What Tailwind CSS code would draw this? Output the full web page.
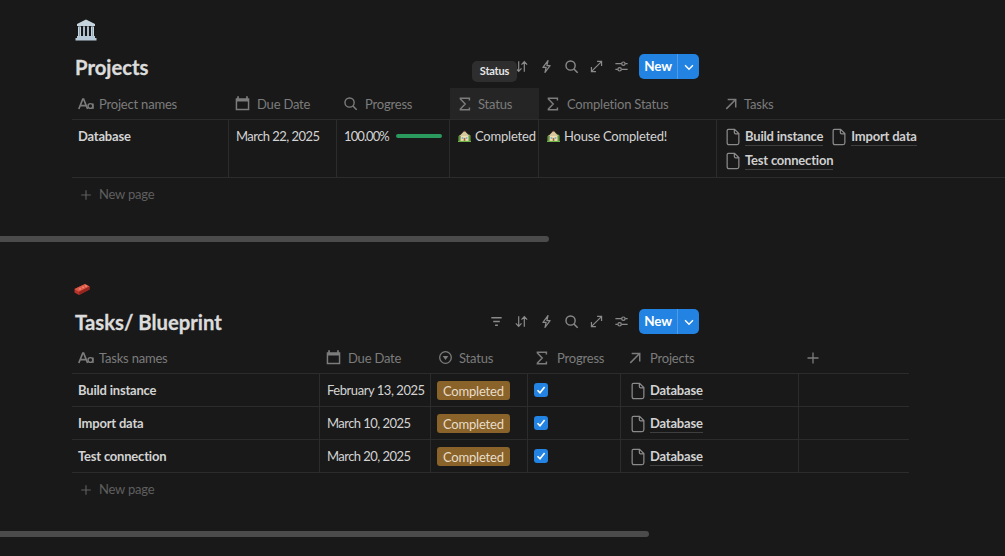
<!DOCTYPE html>
<html>
<head>
<meta charset="utf-8">
<script src="https://cdn.jsdelivr.net/npm/@tailwindcss/browser@4"></script>
</head>
<body class="bg-[#191919]">
<svg width="0" height="0" class="absolute">
  <defs>
    <symbol id="aa" viewBox="0 0 16 16"><path d="M0.8 13 L4.8 3 H5.6 L9.6 13 M2.3 9.6 H8.1" fill="none" stroke="currentColor" stroke-width="1.7"/><circle cx="12.4" cy="10" r="2.4" fill="none" stroke="currentColor" stroke-width="1.4"/><path d="M15 7.5 V13" stroke="currentColor" stroke-width="1.4"/></symbol>
    <symbol id="cal" viewBox="0 0 16 16"><path d="M3 1.2 H4.6 V3 H11.4 V1.2 H13 V3 H14.4 V14.4 H1.6 V3 H3 Z M3 6 V13 H13 V6 Z" fill="currentColor" fill-rule="evenodd"/></symbol>
    <symbol id="search" viewBox="0 0 16 16"><circle cx="7" cy="7" r="4.9" fill="none" stroke="currentColor" stroke-width="1.5"/><path d="M10.6 10.6 L14.6 14.6" stroke="currentColor" stroke-width="1.6"/></symbol>
    <symbol id="sigma" viewBox="0 0 16 16"><path d="M12.4 4.4 V2.2 H3.4 V3 L8.2 8 L3.4 13 V13.8 H12.4 V11.6" fill="none" stroke="currentColor" stroke-width="1.5"/></symbol>
    <symbol id="arrow" viewBox="0 0 16 16"><path d="M2.6 13.6 L13 3.2 M4.2 2.8 H13.4 V12" fill="none" stroke="currentColor" stroke-width="1.7"/></symbol>
    <symbol id="doc" viewBox="0 0 16 16"><path d="M3.8 1.2 H9.4 L13.2 5 V13.2 Q13.2 14.8 11.6 14.8 H4.4 Q2.8 14.8 2.8 13.2 V2.2 Q2.8 1.2 3.8 1.2 Z M9.2 1.4 V4 Q9.2 5.2 10.4 5.2 H13" fill="none" stroke="currentColor" stroke-width="1.1"/></symbol>
    <symbol id="plus" viewBox="0 0 16 16"><path d="M8 2.5 V13.5 M2.5 8 H13.5" stroke="currentColor" stroke-width="1.3"/></symbol>
    <symbol id="filter" viewBox="0 0 16 16"><path d="M2.5 4 H13.5 M4.5 8 H11.5 M6.5 12 H9.5" stroke="currentColor" stroke-width="1.4"/></symbol>
    <symbol id="sort" viewBox="0 0 16 16"><path d="M5 2.5 V13 M2 10 L5 13.2 L8 10 M11 13.5 V3 M8 6 L11 2.8 L14 6" fill="none" stroke="currentColor" stroke-width="1.3"/></symbol>
    <symbol id="bolt" viewBox="0 0 16 16"><path d="M9.6 1.6 L4.2 9 H7.6 L6.4 14.4 L11.8 7 H8.4 Z" fill="none" stroke="currentColor" stroke-width="1.3" stroke-linejoin="round"/></symbol>
    <symbol id="expand" viewBox="0 0 16 16"><path d="M3 13 L13 3 M8.6 2.6 H13.4 V7.4 M2.6 8.6 V13.4 H7.4" fill="none" stroke="currentColor" stroke-width="1.3"/></symbol>
    <symbol id="sliders" viewBox="0 0 16 16"><path d="M1.5 5 H8 M12 5 H14.5 M1.5 11 H4 M8 11 H14.5" stroke="currentColor" stroke-width="1.3"/><circle cx="10" cy="5" r="1.8" fill="none" stroke="currentColor" stroke-width="1.3"/><circle cx="6" cy="11" r="1.8" fill="none" stroke="currentColor" stroke-width="1.3"/></symbol>
    <symbol id="chev" viewBox="0 0 16 16"><path d="M3.5 6 L8 10.5 L12.5 6" fill="none" stroke="currentColor" stroke-width="1.6"/></symbol>
    <symbol id="status" viewBox="0 0 16 16"><circle cx="8" cy="8" r="6.2" fill="none" stroke="currentColor" stroke-width="1.4"/><path d="M5 6.4 H11 L8 10.6 Z" fill="currentColor"/></symbol>
    <symbol id="house" viewBox="0 0 16 16"><path d="M0.5 15 V9 L2.5 7 L3.5 15 Z M15.5 15 V8 L13 6 L12 15 Z" fill="#5c9a3c"/><path d="M3 15 V8 H13 V15 Z" fill="#f1dfb0"/><path d="M1.8 8.6 L8 2 L14.2 8.6 Z" fill="#d8c79c"/><path d="M8 2 L9.6 3.7 H6.4 Z" fill="#a8553f"/><path d="M4.5 10 H6.5 V12 H4.5 Z M9.5 10 H11.5 V12 H9.5 Z" fill="#6fa8d6"/><path d="M7 11 H9 V15 H7 Z" fill="#9a6b3d"/><path d="M0 14.6 H16 V16 H0 Z" fill="#6db34a"/></symbol>
  </defs>
</svg>

<main class="w-[1005px] h-[556px] overflow-hidden relative bg-[#191919] font-['Lato','Liberation_Sans',sans-serif] text-[13px] tracking-[-0.2px] text-[#d3d3d3]">

  <!-- Projects -->
  <section class="pt-[19px]">
    <div class="pl-[74px] h-[22px]">
      <svg width="24" height="22" viewBox="0 0 24 22" class="block">
        <path d="M12 0.5 L21 5 V7 H3 V5 Z" fill="#c6d4de"/>
        <path d="M1.5 19 H22.5 V21.5 H1.5 Z M3 17 H21 V19 H3 Z" fill="#b9cbd8"/>
        <path d="M4 7.5 H7 V17 H4 Z M9 7.5 H11 V17 H9 Z M13 7.5 H15 V17 H13 Z M17 7.5 H20 V17 H17 Z" fill="#c6d4de"/>
        <path d="M5 7.5 H6 V17 H5 Z M9.5 7.5 H10.5 V17 H9.5 Z M13.5 7.5 H14.5 V17 H13.5 Z M18 7.5 H19 V17 H18 Z" fill="#8fa5b5"/>
      </svg>
    </div>
    <div class="mt-[13px] ml-[75px] w-[624px] h-[25px] flex items-center justify-between">
      <h2 class="mt-[2px] text-[20.3px] tracking-normal leading-[25px] font-bold [-webkit-text-stroke:0.3px] text-[#dcdcdc]">Projects</h2>
      <div class="flex items-center text-[#8a8a8a]">
        <svg class="w-[15px] h-[15px] mr-[10px]"><use href="#sort"/></svg>
        <svg class="w-[15px] h-[15px] mr-[10px]"><use href="#bolt"/></svg>
        <svg class="w-[15px] h-[15px] mr-[10px]"><use href="#search"/></svg>
        <svg class="w-[15px] h-[15px] mr-[10px]"><use href="#expand"/></svg>
        <svg class="w-[15px] h-[15px] mr-[10px]"><use href="#sliders"/></svg>
        <div class="flex h-[25px] w-[60px] rounded-[5px] bg-[#2383e2] text-white font-bold text-[13.5px] items-stretch">
          <span class="w-[39px] flex items-center justify-center border-r border-white/20">New</span>
          <span class="flex-1 flex items-center justify-center"><svg class="w-[14px] h-[14px]"><use href="#chev"/></svg></span>
        </div>
      </div>
    </div>

    <div class="mt-[9px] ml-[72px] w-[933px]">
      <div class="grid grid-cols-[157px_108px_113px_89px_178px_1fr] h-[32px] border-b border-[#2c2c2c] text-[#7c7c7c]">
        <div class="flex items-center gap-[5px] pl-[6px] pt-[3px]"><svg class="w-[16px] h-[16px] mb-[3px]"><use href="#aa"/></svg>Project names</div>
        <div class="flex items-center gap-[6px] pl-[5px] pt-[3px]"><svg class="w-[17px] h-[17px] mb-[3px]"><use href="#cal"/></svg>Due Date</div>
        <div class="flex items-center gap-[7px] pl-[6px] pt-[3px]"><svg class="w-[15px] h-[15px] mb-[3px]"><use href="#search"/></svg>Progress</div>
        <div class="flex items-center gap-[5px] pl-[7px] pt-[3px] bg-[#252525]"><svg class="w-[16px] h-[16px] mb-[3px]"><use href="#sigma"/></svg>Status</div>
        <div class="flex items-center gap-[6px] pl-[6px] pt-[3px]"><svg class="w-[16px] h-[16px] mb-[3px]"><use href="#sigma"/></svg>Completion Status</div>
        <div class="flex items-center gap-[6px] pl-[7px] pt-[3px]"><svg class="w-[14px] h-[14px] mb-[3px]"><use href="#arrow"/></svg>Tasks</div>
      </div>
      <div class="grid grid-cols-[157px_108px_113px_89px_178px_1fr] h-[58px] border-b border-[#2c2c2c]">
        <div class="border-r border-[#2c2c2c] pl-[6px] pt-[7px] font-bold">Database</div>
        <div class="border-r border-[#2c2c2c] pl-[7px] pt-[7px] tracking-[-0.55px]">March 22, 2025</div>
        <div class="border-r border-[#2c2c2c] pl-[7px] pt-[7px] flex items-start gap-[7px]"><span class="tracking-[-0.9px]">100.00%</span><span class="w-[46px] h-[4px] mt-[7px] rounded-full bg-[#2b9a5f]"></span></div>
        <div class="border-r border-[#2c2c2c] pl-[8px] pt-[7px] flex items-start gap-[4px] whitespace-nowrap"><svg class="w-[13px] h-[13px] mt-[2px] shrink-0"><use href="#house"/></svg>Completed</div>
        <div class="border-r border-[#2c2c2c] pl-[8px] pt-[7px] flex items-start gap-[4px] whitespace-nowrap"><svg class="w-[13px] h-[13px] mt-[2px] shrink-0"><use href="#house"/></svg>House Completed!</div>
        <div class="pl-[7px] pt-[7px] font-bold text-[#cfcfcf]">
          <div class="flex items-center h-[19px] gap-[7px]">
            <span class="flex items-center gap-[3px]"><svg class="w-[18px] h-[18px] text-[#8a8a8a]"><use href="#doc"/></svg><span class="border-b border-[#3f3f3f] leading-[17px]">Build instance</span></span>
            <span class="flex items-center gap-[3px]"><svg class="w-[18px] h-[18px] text-[#8a8a8a]"><use href="#doc"/></svg><span class="border-b border-[#3f3f3f] leading-[17px]">Import data</span></span>
          </div>
          <div class="flex items-center h-[19px] mt-[5px]">
            <span class="flex items-center gap-[3px]"><svg class="w-[18px] h-[18px] text-[#8a8a8a]"><use href="#doc"/></svg><span class="border-b border-[#3f3f3f] leading-[17px]">Test connection</span></span>
          </div>
        </div>
      </div>
      <div class="h-[33px] flex items-center gap-[6px] pl-[7px] text-[#5f5f5f]"><svg class="w-[14px] h-[14px]"><use href="#plus"/></svg>New page</div>
    </div>
    <div class="mt-[25px] w-[549px] h-[6px] rounded-r-full bg-[#4b4b4b]"></div>
  </section>

  <!-- Tasks -->
  <section class="mt-[41px]">
    <div class="pl-[74px] h-[14px]">
      <svg width="16" height="13" viewBox="0 0 16 13" class="block">
        <path d="M0.5 6 L11 1 L15.5 3.5 V6.5 L5 12 L0.5 9.5 Z" fill="#b8332a"/>
        <path d="M0.5 6 L11 1 L15.5 3.5 L5 8.8 Z" fill="#dd5a48"/>
        <path d="M5 8.8 V12 L15.5 6.5 V3.5 Z" fill="#96261f"/>
        <circle cx="6" cy="5.8" r="0.9" fill="#f08a76"/><circle cx="9" cy="4.3" r="0.9" fill="#f08a76"/><circle cx="12" cy="3" r="0.9" fill="#f08a76"/>
      </svg>
    </div>
    <div class="mt-[12px] ml-[75px] w-[624px] h-[25px] flex items-center justify-between">
      <h2 class="mt-[2px] text-[20.3px] tracking-normal leading-[25px] font-bold [-webkit-text-stroke:0.3px] text-[#dcdcdc]">Tasks/ Blueprint</h2>
      <div class="flex items-center text-[#8a8a8a]">
        <svg class="w-[15px] h-[15px] mr-[10px]"><use href="#filter"/></svg>
        <svg class="w-[15px] h-[15px] mr-[10px]"><use href="#sort"/></svg>
        <svg class="w-[15px] h-[15px] mr-[10px]"><use href="#bolt"/></svg>
        <svg class="w-[15px] h-[15px] mr-[10px]"><use href="#search"/></svg>
        <svg class="w-[15px] h-[15px] mr-[10px]"><use href="#expand"/></svg>
        <svg class="w-[15px] h-[15px] mr-[10px]"><use href="#sliders"/></svg>
        <div class="flex h-[25px] w-[60px] rounded-[5px] bg-[#2383e2] text-white font-bold text-[13.5px] items-stretch">
          <span class="w-[39px] flex items-center justify-center border-r border-white/20">New</span>
          <span class="flex-1 flex items-center justify-center"><svg class="w-[14px] h-[14px]"><use href="#chev"/></svg></span>
        </div>
      </div>
    </div>

    <div class="mt-[8px] ml-[72px] w-[837px]">
      <div class="grid grid-cols-[248px_111px_97px_93px_178px_1fr] h-[32px] border-b border-[#2c2c2c] text-[#7c7c7c]">
        <div class="flex items-center gap-[5px] pl-[6px] pt-[3px]"><svg class="w-[16px] h-[16px] mb-[3px]"><use href="#aa"/></svg>Tasks names</div>
        <div class="flex items-center gap-[6px] pl-[5px] pt-[3px]"><svg class="w-[17px] h-[17px] mb-[3px]"><use href="#cal"/></svg>Due Date</div>
        <div class="flex items-center gap-[6px] pl-[7px] pt-[3px]"><svg class="w-[15px] h-[15px] mb-[3px]"><use href="#status"/></svg>Status</div>
        <div class="flex items-center gap-[7px] pl-[6px] pt-[3px]"><svg class="w-[16px] h-[16px] mb-[3px]"><use href="#sigma"/></svg>Progress</div>
        <div class="flex items-center gap-[8px] pl-[7px] pt-[3px]"><svg class="w-[14px] h-[14px] mb-[3px]"><use href="#arrow"/></svg>Projects</div>
        <div class="flex items-center pl-[6px] pt-[3px]"><svg class="w-[16px] h-[16px] mb-[3px]"><use href="#plus"/></svg></div>
      </div>

      <div class="grid grid-cols-[248px_111px_97px_93px_178px_1fr] h-[33px] border-b border-[#2c2c2c]">
        <div class="border-r border-[#2c2c2c] pl-[6px] pt-[2px] flex items-center font-bold">Build instance</div>
        <div class="border-r border-[#2c2c2c] pl-[7px] pt-[2px] flex items-center whitespace-nowrap tracking-[-0.45px]">February 13, 2025</div>
        <div class="border-r border-[#2c2c2c] pl-[6px] flex items-center"><span class="bg-[#89632a] text-[#e8dcc8] rounded-[3px] px-[6px] h-[19px] leading-[20px]">Completed</span></div>
        <div class="border-r border-[#2c2c2c] pl-[6px] flex items-center"><span class="w-[14px] h-[14px] rounded-[3px] bg-[#2383e2] flex items-center justify-center"><svg width="10" height="10" viewBox="0 0 10 10"><path d="M1.5 5.2 L4 7.8 L8.6 2" fill="none" stroke="white" stroke-width="1.6"/></svg></span></div>
        <div class="border-r border-[#2c2c2c] pl-[8px] pt-[2px] flex items-center gap-[3px] font-bold"><svg class="w-[18px] h-[18px] text-[#8a8a8a]"><use href="#doc"/></svg><span class="border-b border-[#3f3f3f] leading-[17px]">Database</span></div>
        <div></div>
      </div>
      <div class="grid grid-cols-[248px_111px_97px_93px_178px_1fr] h-[33px] border-b border-[#2c2c2c]">
        <div class="border-r border-[#2c2c2c] pl-[6px] pt-[2px] flex items-center font-bold">Import data</div>
        <div class="border-r border-[#2c2c2c] pl-[7px] pt-[2px] flex items-center whitespace-nowrap tracking-[-0.55px]">March 10, 2025</div>
        <div class="border-r border-[#2c2c2c] pl-[6px] flex items-center"><span class="bg-[#89632a] text-[#e8dcc8] rounded-[3px] px-[6px] h-[19px] leading-[20px]">Completed</span></div>
        <div class="border-r border-[#2c2c2c] pl-[6px] flex items-center"><span class="w-[14px] h-[14px] rounded-[3px] bg-[#2383e2] flex items-center justify-center"><svg width="10" height="10" viewBox="0 0 10 10"><path d="M1.5 5.2 L4 7.8 L8.6 2" fill="none" stroke="white" stroke-width="1.6"/></svg></span></div>
        <div class="border-r border-[#2c2c2c] pl-[8px] pt-[2px] flex items-center gap-[3px] font-bold"><svg class="w-[18px] h-[18px] text-[#8a8a8a]"><use href="#doc"/></svg><span class="border-b border-[#3f3f3f] leading-[17px]">Database</span></div>
        <div></div>
      </div>
      <div class="grid grid-cols-[248px_111px_97px_93px_178px_1fr] h-[33px] border-b border-[#2c2c2c]">
        <div class="border-r border-[#2c2c2c] pl-[6px] pt-[2px] flex items-center font-bold">Test connection</div>
        <div class="border-r border-[#2c2c2c] pl-[7px] pt-[2px] flex items-center whitespace-nowrap tracking-[-0.55px]">March 20, 2025</div>
        <div class="border-r border-[#2c2c2c] pl-[6px] flex items-center"><span class="bg-[#89632a] text-[#e8dcc8] rounded-[3px] px-[6px] h-[19px] leading-[20px]">Completed</span></div>
        <div class="border-r border-[#2c2c2c] pl-[6px] flex items-center"><span class="w-[14px] h-[14px] rounded-[3px] bg-[#2383e2] flex items-center justify-center"><svg width="10" height="10" viewBox="0 0 10 10"><path d="M1.5 5.2 L4 7.8 L8.6 2" fill="none" stroke="white" stroke-width="1.6"/></svg></span></div>
        <div class="border-r border-[#2c2c2c] pl-[8px] pt-[2px] flex items-center gap-[3px] font-bold"><svg class="w-[18px] h-[18px] text-[#8a8a8a]"><use href="#doc"/></svg><span class="border-b border-[#3f3f3f] leading-[17px]">Database</span></div>
        <div></div>
      </div>
      <div class="h-[33px] flex items-center gap-[6px] pl-[7px] text-[#5f5f5f]"><svg class="w-[14px] h-[14px]"><use href="#plus"/></svg>New page</div>
    </div>
    <div class="mt-[25px] w-[649px] h-[6px] rounded-r-full bg-[#4b4b4b]"></div>
  </section>

  <!-- Tooltip -->
  <div class="absolute left-[472px] top-[61px] w-[45px] h-[21px] rounded-[5px] bg-[#2e2e2e] text-[#e6e6e6] text-[11px] font-bold flex items-center justify-center">Status</div>
</main>
</body>
</html>
